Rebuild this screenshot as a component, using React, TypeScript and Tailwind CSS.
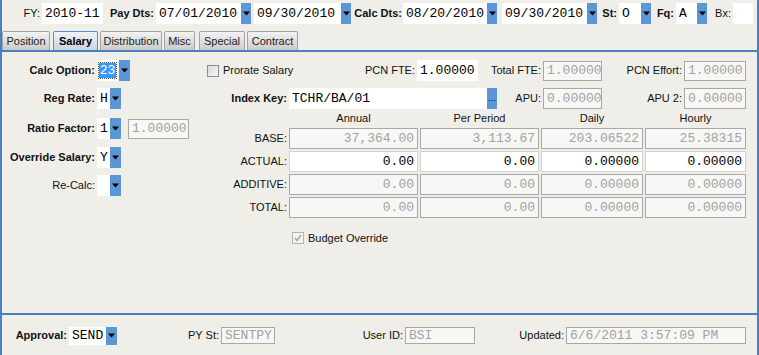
import React from "react";

// fonts used all over the form
const mono = "font-['Liberation_Mono','Courier_New',monospace] text-[13px] leading-none";

type Kind = "plain" | "edit" | "dis";

const kinds: Record<Kind, string> = {
  plain: "bg-white text-black",
  edit: "bg-white border border-[#d2d2d2] text-black",
  dis: "bg-[#f7f7f5] border border-[#a8a8a8] text-[#a2a2a2]",
};

function Field({
  cls,
  kind = "plain",
  right = false,
  children,
}: {
  cls: string;
  kind?: Kind;
  right?: boolean;
  children?: React.ReactNode;
}) {
  return (
    <div
      className={`${cls} ${kinds[kind]} ${mono} shrink-0 flex items-center px-[3px] whitespace-nowrap overflow-hidden ${
        right ? "justify-end" : ""
      }`}
    >
      {children}
    </div>
  );
}

function Drop({ cls = "w-[10px] h-[21px]" }: { cls?: string }) {
  return (
    <div className={`${cls} bg-[#5b97d6] shrink-0 flex items-center justify-center`}>
      <svg width="7" height="5" viewBox="0 0 7 5">
        <path d="M0 0.5h7L3.5 4.5z" fill="#000" />
      </svg>
    </div>
  );
}

function Label({ cls, bold = false, children }: { cls: string; bold?: boolean; children: React.ReactNode }) {
  return (
    <div className={`${cls} shrink-0 flex items-center justify-end whitespace-nowrap ${bold ? "font-bold" : ""}`}>
      {children}
    </div>
  );
}

function Tab({ cls, label, active = false }: { cls: string; label: string; active?: boolean }) {
  return (
    <div
      className={`${cls} h-[19px] shrink-0 flex items-center justify-center rounded-t-[2px] border border-b-0 text-[11px] ${
        active
          ? "border-[#5b8ccb] bg-linear-to-b from-[#f1f4f8] to-[#c6d3e2] font-bold text-black"
          : "border-[#a3a3a3] bg-linear-to-b from-[#f3f3f3] to-[#cbcbcb] text-[#222]"
      }`}
    >
      {label}
    </div>
  );
}

function Check({ checked = false }: { checked?: boolean }) {
  if (checked) {
    return (
      <div className="w-[12px] h-[12px] shrink-0 border border-[#b4b4b4] bg-[#f2f2f0] flex items-center justify-center">
        <svg width="8" height="8" viewBox="0 0 8 8">
          <path d="M1 4l2 2.5L7 1" stroke="#a6a6a6" strokeWidth="1.4" fill="none" />
        </svg>
      </div>
    );
  }
  return <div className="w-[12px] h-[12px] shrink-0 border border-[#8c8c8c] bg-linear-to-br from-[#d9d9d9] to-[#fbfbfb]" />;
}

const rows = [
  { label: "BASE:", kind: "dis" as Kind, vals: ["37,364.00", "3,113.67", "203.06522", "25.38315"] },
  { label: "ACTUAL:", kind: "edit" as Kind, vals: ["0.00", "0.00", "0.00000", "0.00000"] },
  { label: "ADDITIVE:", kind: "dis" as Kind, vals: ["0.00", "0.00", "0.00000", "0.00000"] },
  { label: "TOTAL:", kind: "dis" as Kind, vals: ["0.00", "0.00", "0.00000", "0.00000"] },
];

function App() {
  return (
    <div className="w-[759px] h-[355px] bg-[#efeee9] border-x-2 border-[#4a7fc0] flex flex-col font-['Liberation_Sans',Arial,sans-serif] text-[11px] text-[#111] overflow-hidden">
      {/* header line */}
      <div className="h-[29px] pt-[3px] flex items-start shrink-0">
        <Label cls="w-[38px] h-[21px]">FY:</Label>
        <Field cls="ml-[2px] w-[61px] h-[21px]">2010-11</Field>
        <Label cls="w-[51px] h-[21px]" bold>Pay Dts:</Label>
        <Field cls="ml-[2px] w-[85px] h-[21px]">07/01/2010</Field>
        <Drop />
        <Field cls="ml-[3px] w-[87px] h-[21px]">09/30/2010</Field>
        <Drop />
        <Label cls="w-[51px] h-[21px]" bold>Calc Dts:</Label>
        <Field cls="ml-[1px] w-[84px] h-[21px]">08/20/2010</Field>
        <Drop />
        <Field cls="ml-[5px] w-[85px] h-[21px]">09/30/2010</Field>
        <Drop />
        <Label cls="w-[20px] h-[21px]" bold>St:</Label>
        <Field cls="ml-[2px] w-[22px] h-[21px]">O</Field>
        <Drop />
        <Label cls="w-[23px] h-[21px]" bold>Fq:</Label>
        <Field cls="ml-[2px] w-[21px] h-[21px]">A</Field>
        <Drop />
        <Label cls="w-[24px] h-[21px]">Bx:</Label>
        <Field cls="ml-[2px] w-[20px] h-[21px]" />
      </div>

      {/* tabs */}
      <div className="h-[21px] pt-[2px] flex items-start shrink-0">
        <Tab cls="w-[48px]" label="Position" />
        <Tab cls="ml-[3px] w-[45px]" label="Salary" active />
        <Tab cls="ml-[2px] w-[62px]" label="Distribution" />
        <Tab cls="ml-[2px] w-[31px]" label="Misc" />
        <Tab cls="ml-[4px] w-[46px]" label="Special" />
        <Tab cls="ml-[2px] w-[51px]" label="Contract" />
      </div>
      <div className="h-[2px] bg-[#4a7fc0] shrink-0" />

      {/* salary panel */}
      <div className="h-[261px] flex shrink-0">
        <div className="w-[188px] pt-[8px] flex flex-col shrink-0">
          <div className="flex items-center h-[21px]">
            <Label cls="w-[93px] h-[21px]" bold>Calc Option:</Label>
            <div className={`ml-[2px] w-[21px] h-[21px] bg-white shrink-0 flex items-center justify-center ${mono}`}>
              <span className="bg-[#3399ff] text-white px-[1px] h-[15px] flex items-center outline outline-dotted outline-[#555]">23</span>
            </div>
            <Drop cls="ml-[1px] w-[11px] h-[21px]" />
          </div>
          <div className="mt-[7px] flex items-center h-[21px]">
            <Label cls="w-[93px] h-[21px]" bold>Reg Rate:</Label>
            <Field cls="ml-[2px] w-[13px] h-[21px]">H</Field>
            <Drop cls="w-[11px] h-[21px]" />
          </div>
          <div className="mt-[9px] flex items-center h-[21px]">
            <Label cls="w-[93px] h-[21px]" bold>Ratio Factor:</Label>
            <Field cls="ml-[2px] w-[13px] h-[21px]">1</Field>
            <Drop cls="w-[11px] h-[21px]" />
            <Field cls="ml-[7px] w-[61px] h-[20px]" kind="dis">1.00000</Field>
          </div>
          <div className="mt-[8px] flex items-center h-[21px]">
            <Label cls="w-[93px] h-[21px]" bold>Override Salary:</Label>
            <Field cls="ml-[2px] w-[13px] h-[21px]">Y</Field>
            <Drop cls="w-[11px] h-[21px]" />
          </div>
          <div className="mt-[7px] flex items-center h-[21px]">
            <Label cls="w-[93px] h-[21px]">Re-Calc:</Label>
            <Field cls="ml-[2px] w-[13px] h-[21px]" />
            <Drop cls="w-[11px] h-[21px]" />
          </div>
        </div>

        <div className="flex-1 pt-[8px] flex flex-col">
          <div className="flex items-center h-[21px]">
            <div className="w-[165px] shrink-0 flex items-center pl-[17px] gap-[4px]">
              <Check />
              <span>Prorate Salary</span>
            </div>
            <Label cls="w-[60px] h-[21px]">PCN FTE:</Label>
            <Field cls="ml-[2px] w-[61px] h-[21px]">1.00000</Field>
            <Label cls="w-[63px] h-[21px]">Total FTE:</Label>
            <Field cls="ml-[2px] w-[59px] h-[20px]" kind="dis">1.00000</Field>
            <Label cls="w-[80px] h-[21px]">PCN Effort:</Label>
            <Field cls="ml-[2px] w-[62px] h-[20px]" kind="dis">1.00000</Field>
          </div>

          <div className="mt-[7px] flex items-center h-[21px]">
            <Label cls="w-[97px] h-[21px]" bold>Index Key:</Label>
            <Field cls="ml-[2px] w-[198px] h-[21px]">TCHR/BA/01</Field>
            <div className="w-[10px] h-[21px] bg-[#5b97d6] shrink-0 flex items-center justify-center text-[9px] leading-none text-black">...</div>
            <Label cls="w-[44px] h-[21px]">APU:</Label>
            <Field cls="ml-[2px] w-[59px] h-[21px]" kind="dis">0.00000</Field>
            <Label cls="w-[80px] h-[21px]">APU 2:</Label>
            <Field cls="ml-[2px] w-[62px] h-[21px]" kind="dis">0.00000</Field>
          </div>

          <div className="mt-[2px] grid grid-cols-[97px_129px_119px_102px_101px] grid-rows-[15px_21px_21px_21px_21px] gap-x-[2px] gap-y-[2px]">
            <div />
            <div className="text-center leading-[15px]">Annual</div>
            <div className="text-center leading-[15px]">Per Period</div>
            <div className="text-center leading-[15px]">Daily</div>
            <div className="text-center leading-[15px]">Hourly</div>
            {rows.map((r) => (
              <React.Fragment key={r.label}>
                <Label cls="h-[21px]">{r.label}</Label>
                {r.vals.map((v, i) => (
                  <Field key={i} cls="w-full h-[21px]" kind={r.kind} right>
                    {v}
                  </Field>
                ))}
              </React.Fragment>
            ))}
          </div>

          <div className="mt-[13px] ml-[102px] flex items-center gap-[4px] h-[14px]">
            <Check checked />
            <span>Budget Override</span>
          </div>
        </div>
      </div>

      <div className="h-[2px] bg-[#4a7fc0] shrink-0" />

      {/* footer */}
      <div className="flex-1 pt-[12px]">
        <div className="flex items-center h-[17px]">
          <Label cls="w-[65px] h-[17px]" bold>Approval:</Label>
          <Field cls="ml-[2px] w-[37px] h-[18px]">SEND</Field>
          <Drop cls="w-[11px] h-[18px]" />
          <Label cls="w-[102px] h-[17px]">PY St:</Label>
          <Field cls="ml-[2px] w-[54px] h-[17px]" kind="dis">SENTPY</Field>
          <Label cls="w-[128px] h-[17px]">User ID:</Label>
          <Field cls="ml-[2px] w-[70px] h-[17px]" kind="dis">BSI</Field>
          <Label cls="w-[89px] h-[17px]">Updated:</Label>
          <Field cls="ml-[2px] w-[180px] h-[17px]" kind="dis">6/6/2011 3:57:09 PM</Field>
        </div>
      </div>
    </div>
  );
}

export default App;
